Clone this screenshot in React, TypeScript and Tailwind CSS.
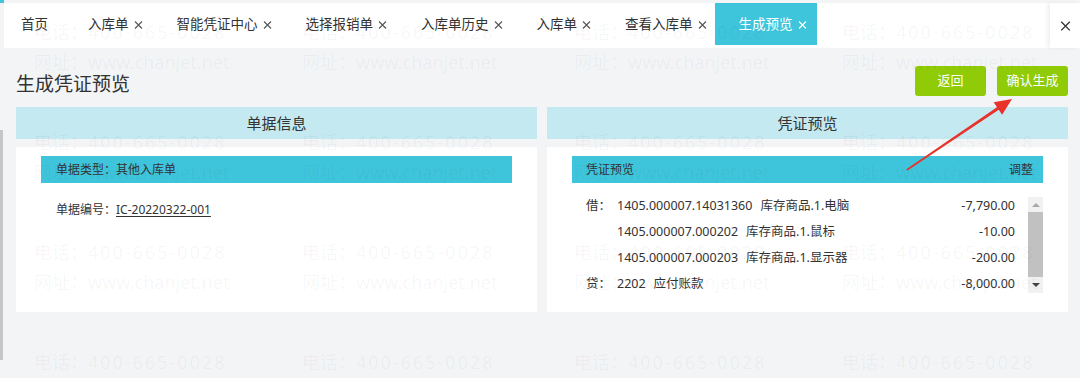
import React from 'react';

const tabs = [
  { label: '首页', closable: false },
  { label: '入库单', closable: true },
  { label: '智能凭证中心', closable: true },
  { label: '选择报销单', closable: true },
  { label: '入库单历史', closable: true },
  { label: '入库单', closable: true },
  { label: '查看入库单', closable: true },
];

const entries = [
  { side: '借：', code: '1405.000007.14031360', name: '库存商品.1.电脑', amount: '-7,790.00' },
  { side: '', code: '1405.000007.000202', name: '库存商品.1.鼠标', amount: '-10.00' },
  { side: '', code: '1405.000007.000203', name: '库存商品.1.显示器', amount: '-200.00' },
  { side: '贷：', code: '2202', name: '应付账款', amount: '-8,000.00' },
];

const CloseMark = ({ className = '' }: { className?: string }) => (
  <svg viewBox="0 0 9 9" className={className} fill="none" stroke="currentColor" strokeWidth="1.1">
    <path d="M1 1.5 L8 8.5 M8 1.5 L1 8.5" />
  </svg>
);

// faint repeated contact watermark laid over the whole page
const Watermark = () => {
  const cols = [0, 1, 2, 3];
  const rows = [0, 1, 2, 3];
  return (
    <div className="pointer-events-none absolute inset-0 overflow-hidden text-[18px] text-black/[0.045]">
      <div className="grid grid-cols-[268px_272px_268px_240px] pl-[34px] pt-[20px]">
        {cols.map((c) => (
          <div key={c} className="flex flex-col">
            {rows.map((r) => (
              <div key={r} className="flex h-[110px] flex-col gap-[6px] whitespace-nowrap leading-[24px]">
                <div>
                  电话：<span className="tracking-[2px]">400-665-0028</span>
                </div>
                {r < 3 && <div>网址：www.chanjet.net</div>}
              </div>
            ))}
          </div>
        ))}
      </div>
    </div>
  );
};

// red annotation arrow pointing at the confirm button
const Arrow = () => (
  <svg className="pointer-events-none absolute left-0 top-0" width="1080" height="378" viewBox="0 0 1080 378">
    <polygon
      fill="#e8322b"
      points="906.3,169.3 997.0,107.2 993.7,102.3 1012,99 1002.1,114.7 998.8,109.8 907.1,170.7"
    />
  </svg>
);

const Panel = ({ title, children }: { title: string; children: React.ReactNode }) => (
  <div className="flex flex-col">
    <div className="flex h-[32px] items-center justify-center bg-[#c4e9f0] text-[15px] text-[#333]">{title}</div>
    <div className="mt-[8px] h-[165px] bg-white">{children}</div>
  </div>
);

export default function App() {
  return (
    <div className="relative flex h-[378px] w-[1080px] overflow-hidden bg-[#f3f4f6] font-['Noto_Sans','Noto_Sans_CJK_SC',sans-serif] text-[#333]">
      {/* left frame strip */}
      <div className="flex w-[4px] shrink-0 flex-col">
        <div className="h-[3px] bg-[#3ec5dc]" />
        <div className="mt-[127px] h-[230px] w-[3px] bg-[#c6c6c6]" />
      </div>

      <div className="flex min-w-0 flex-1 flex-col">
        <div className="h-[3px]" />
        {/* tab bar */}
        <div className="flex h-[45px] items-start bg-white">
          {tabs.map((t, i) => (
            <div
              key={i}
              className={`flex h-[42px] items-center gap-[5px] text-[13.5px] text-[#333] ${
                i === 0 ? 'pl-[17px] pr-[23px]' : i === tabs.length - 1 ? 'pl-[17px] pr-[8px]' : 'px-[17px]'
              }`}
            >
              <span className="whitespace-nowrap">{t.label}</span>
              {t.closable && <CloseMark className="h-[9px] w-[9px] text-[#555]" />}
            </div>
          ))}
          <div className="flex h-[42px] items-center gap-[5px] bg-[#3ec5dc] pl-[24px] pr-[10px] text-[13.5px] text-white">
            <span className="whitespace-nowrap">生成预览</span>
            <CloseMark className="h-[9px] w-[9px] text-white" />
          </div>
          <div className="ml-auto flex h-[45px] w-[30px] items-center justify-center bg-white shadow-[-3px_0_4px_rgba(0,0,0,0.06)]">
            <CloseMark className="h-[11px] w-[11px] text-[#333]" />
          </div>
        </div>

        <div className="flex flex-col px-[12px]">
          {/* title row */}
          <div className="mt-[18px] flex h-[30px] items-center justify-between">
            <h1 className="mt-[5px] text-[19px] leading-[24px] text-[#333]">生成凭证预览</h1>
            <div className="flex gap-[11px]">
              <button className="h-[30px] w-[71px] rounded-[3px] bg-[#8fcb06] text-[13px] text-white">返回</button>
              <button className="h-[30px] w-[71px] rounded-[3px] bg-[#8fcb06] text-[13px] text-white">确认生成</button>
            </div>
          </div>

          {/* panels */}
          <div className="mt-[11px] grid grid-cols-2 gap-[10px]">
            <Panel title="单据信息">
              <div className="mx-[25px] mt-[9px] flex h-[27px] items-center bg-[#3ec5dc] pl-[15px] text-[12px]">
                单据类型：其他入库单
              </div>
              <div className="mt-[17px] pl-[40px] text-[12px] leading-[20px]">
                单据编号：<span className="underline underline-offset-2">IC-20220322-001</span>
              </div>
            </Panel>

            <Panel title="凭证预览">
              <div className="mx-[25px] mt-[9px] flex h-[27px] items-center justify-between bg-[#3ec5dc] pl-[14px] pr-[10px] text-[12px]">
                <span>凭证预览</span>
                <span>调整</span>
              </div>
              <div className="mx-[25px] flex">
                <div className="mt-[10px] flex flex-1 flex-col pl-[14px] pr-[13px] text-[12.5px]">
                  {entries.map((e, i) => (
                    <div key={i} className="flex h-[26px] items-center whitespace-nowrap">
                      <span className="w-[31px] shrink-0">{e.side}</span>
                      <span>{e.code}</span>
                      <span className="ml-[8px]">{e.name}</span>
                      <span className="ml-auto">{e.amount}</span>
                    </div>
                  ))}
                </div>
                <div className="mt-[14px] flex h-[96px] w-[15px] flex-col bg-[#f1f1f1]">
                  <div className="flex h-[15px] items-center justify-center">
                    <div className="h-0 w-0 border-x-[4px] border-b-[4px] border-x-transparent border-b-[#a8a8a8]" />
                  </div>
                  <div className="h-[65px] bg-[#c1c1c1]" />
                  <div className="flex flex-1 items-center justify-center">
                    <div className="h-0 w-0 border-x-[4px] border-t-[4px] border-x-transparent border-t-[#444]" />
                  </div>
                </div>
              </div>
            </Panel>
          </div>
        </div>
      </div>

      <Watermark />
      <Arrow />
    </div>
  );
}
